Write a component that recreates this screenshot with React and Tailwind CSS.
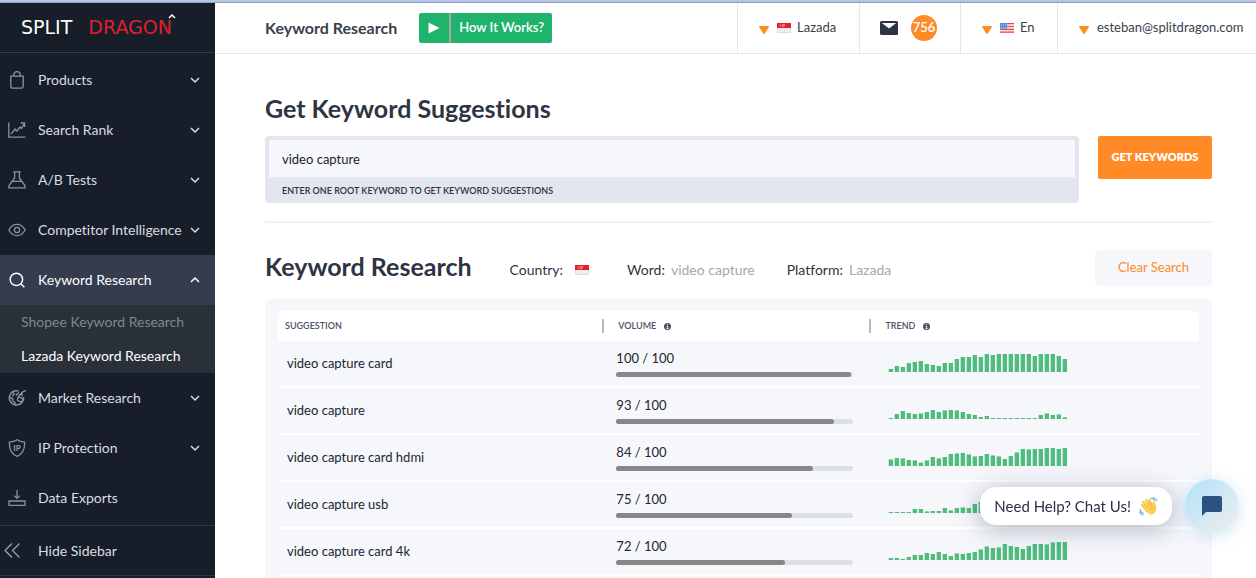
import React, { useState } from 'react';

const NAV_TOP = [
  { label: 'Products',                icon: 'bag',   menu: true },
  { label: 'Search Rank',             icon: 'chart', menu: true },
  { label: 'A/B Tests',               icon: 'flask', menu: true },
  { label: 'Competitor Intelligence', icon: 'eye',   menu: true },
];

const NAV_BOTTOM = [
  { label: 'Market Research', icon: 'market', menu: true },
  { label: 'IP Protection',   icon: 'shield', menu: true },
  { label: 'Data Exports',    icon: 'export', menu: false },
];

const ROWS = [
  { word: 'video capture card',      volume: 100, fill: 99, trend: [3, 6, 5, 9, 10, 11, 8, 7, 6, 9, 9, 13, 15, 15, 17, 15, 18, 17, 18, 18, 18, 18, 18, 18, 16, 18, 18, 18, 16, 13] },
  { word: 'video capture',           volume: 93,  fill: 92, trend: [1, 5, 8, 6, 5, 5.5, 7, 9, 7, 8.5, 9, 8.5, 7, 5, 4, 2, 3, 1, 1, 1, 1, 1, 1, 1, 1, 4, 5.5, 4, 4.5, 1.5] },
  { word: 'video capture card hdmi', volume: 84,  fill: 83, trend: [6.5, 8, 7.5, 6, 5.5, 3.3, 5.5, 9, 7.5, 9, 12, 12.5, 13, 11.5, 9.5, 10, 12, 10.5, 9.5, 7, 10, 13.5, 17, 16.5, 17, 17, 18, 18, 17, 18] },
  { word: 'video capture usb',       volume: 75,  fill: 74, trend: [1, 1, 1, 1, 4, 4, 1.5, 2, 2, 5, 2.5, 5, 5.5, 5, 9, 11, 12, 10, 13, 12, 14, 13, 12, 14, 15, 16, 17, 16, 18, 18] },
  { word: 'video capture card 4k',   volume: 72,  fill: 71, trend: [2, 2, 1, 3, 5, 5, 7, 6, 8, 6, 4, 6.5, 6, 7, 8, 10.5, 13.5, 12, 12.5, 16, 14, 13, 11, 14, 16, 16, 15.5, 17.5, 18, 18] },
];

function NavIcon({ name }) {
  return (
    <svg width="18" height="18" viewBox="0 0 18 18" fill="none" stroke="currentColor" strokeWidth="1.3" aria-hidden="true">
      {name === 'bag' && (
        <>
          <path d="M2.8 5.2h12.4v10a2 2 0 0 1-2 2H4.8a2 2 0 0 1-2-2z" />
          <path d="M5.8 5V3.8a3.2 3.2 0 0 1 6.4 0V5" />
        </>
      )}
      {name === 'chart' && (
        <>
          <path d="M.8 1.5v14.7h16.6" />
          <path d="M3 13.2l4-5.2 2 2 3-4 1.4 1.4 3-4.8M12.8 2h3.8v4" />
        </>
      )}
      {name === 'flask' && (
        <path d="M5.2.9h7.6M6.6 1v6L.9 14.8v2h16.2v-2L11.4 7V1M4.6 10.3h8.8" />
      )}
      {name === 'eye' && (
        <>
          <path d="M.8 9C3 5.2 5.6 3.4 9 3.4S15 5.2 17.2 9C15 12.8 12.4 14.6 9 14.6S3 12.8.8 9z" />
          <circle cx="9" cy="9" r="2.6" />
        </>
      )}
      {name === 'search' && (
        <>
          <circle cx="8.4" cy="8.4" r="6.2" strokeWidth="1.5" />
          <path d="M13 13l3.4 3.2" strokeWidth="1.5" />
        </>
      )}
      {name === 'market' && (
        <>
          <path d="M10.6 2A7.2 7.2 0 1 0 15.6 8" strokeWidth="1.5" />
          <path d="M1.4 8.2l3.4 1.6.2 2.6 2 1 .4 3.2M5 2.8l1.2 2.4-2 2.2M9.8 8.8l2.8-.4 2.6 1.6-1.6 2.8-2.4-.4-1.8-1.4z" />
          <path d="M7.8 6.6l3-3M10 8.2l4-5 4-1.8M14 3.4v3.8" strokeWidth="1.4" />
        </>
      )}
      {name === 'shield' && (
        <>
          <path d="M9 .8c2 1.6 4.6 2.3 7.6 2.3.4 7-1.6 11.8-7.6 14.2C3 14.9 1 10.1 1.4 3.1 4.4 3.1 7 2.4 9 .8z" />
          <text x="9" y="11.5" textAnchor="middle" fontFamily="Lato, sans-serif" fontSize="8" fontWeight="900" fill="currentColor" stroke="none">IP</text>
        </>
      )}
      {name === 'export' && (
        <path d="M1 12h16v4.4H1zM9 1v8.2M6.2 6.6L9 9.4l2.8-2.8" />
      )}
    </svg>
  );
}

function Chevron({ up }) {
  return (
    <svg width="10" height="8" viewBox="0 0 10 8" className="shrink-0" fill="none" stroke="currentColor" strokeWidth="1.5" aria-hidden="true">
      <path d={up ? 'M1 6l4-4 4 4' : 'M1 2l4 4 4-4'} />
    </svg>
  );
}

function NavItem({ item, active }) {
  return (
    <button
      type="button"
      aria-expanded={item.menu ? !!active : undefined}
      className={`flex h-[50px] w-full items-center gap-3 pr-[15px] pl-2 text-left text-sm ${active ? 'bg-[#353c50] text-white' : 'text-[#d9dce2]'}`}
    >
      <span className={active ? 'text-white' : 'text-[#8c929d]'}><NavIcon name={item.icon} /></span>
      <span className="min-w-0 flex-1 whitespace-nowrap">{item.label}</span>
      {item.menu && <Chevron up={active} />}
    </button>
  );
}

function Sidebar() {
  return (
    <aside className="w-[215px] shrink-0 bg-[#171e29]">
      <a href="#" aria-label="Split Dragon" className="flex h-[50px] items-center gap-4 border-b border-[#323c4c] pl-[21px] font-['DejaVu_Sans'] text-[19px]">
        <span className="text-white">SPLIT</span>
        <span className="relative text-[#e01f2d]">
          DRAGON
          <svg className="absolute top-0 -right-1 text-white" width="8" height="6" viewBox="0 0 8 6" fill="none" stroke="currentColor" strokeWidth="1.5">
            <path d="M1 5l3-3 3 3" />
          </svg>
        </span>
      </a>
      <nav>
        <div className="pt-0.5">
          {NAV_TOP.map((item) => <NavItem key={item.label} item={item} />)}
          <NavItem item={{ label: 'Keyword Research', icon: 'search', menu: true }} active />
        </div>
        <ul className="bg-[#293038] text-sm">
          <li><a href="#" className="flex h-[34px] items-center pl-[21px] text-[#7f8694]">Shopee Keyword Research</a></li>
          <li><a href="#" aria-current="page" className="flex h-[34px] items-center pl-[21px] text-white">Lazada Keyword Research</a></li>
        </ul>
        {NAV_BOTTOM.map((item) => <NavItem key={item.label} item={item} />)}
        <button type="button" className="mt-0.5 flex h-[51px] w-full items-center gap-4 border-y border-[#2c3846] pl-1 text-sm text-[#d9dce2]">
          <svg width="18" height="18" viewBox="0 0 18 18" fill="none" stroke="#9aa0aa" strokeWidth="1.3" aria-hidden="true">
            <path d="M8 1.5L1 8.5l7 7M15.5 1.5l-7 7 7 7" />
          </svg>
          Hide Sidebar
        </button>
      </nav>
    </aside>
  );
}

function Caret() {
  return (
    <svg width="10" height="8" viewBox="0 0 10 8" className="mt-1" fill="#ff8a26" aria-hidden="true">
      <path d="M.8 0h8.4q1 .2.5 1.2L6 7.3Q5 8.4 4 7.3L.3 1.2Q-.2.2.8 0z" />
    </svg>
  );
}

function FlagSG() {
  return (
    <svg width="14" height="10" viewBox="0 0 14 10" role="img" aria-label="Singapore">
      <rect width="14" height="10" fill="#dcdcdc" />
      <rect x="1" y="5" width="12" height="4" fill="#f0f0f0" />
      <rect width="14" height="5" fill="#e3202b" />
      <path d="M3.2 1.6v2M5 1.8h3M4.6 3.2h3" stroke="#f7b3b6" strokeWidth=".9" />
    </svg>
  );
}

function FlagUS() {
  return (
    <svg width="14" height="10" viewBox="0 0 14 10" role="img" aria-label="United States">
      <rect width="14" height="10" fill="#f8e3e3" />
      <path d="M0 .7h14M0 3.5h14M0 6.3h14M0 9.2h14" stroke="#e2474d" strokeWidth="1.2" />
      <rect width="7" height="5.6" fill="#4f8fe0" />
      <path d="M1 1.5h5M1 3h5M1 4.5h5" stroke="#a9cbf5" strokeWidth=".6" strokeDasharray="1 1" />
    </svg>
  );
}

function TopBar() {
  return (
    <header className="flex h-[51px] items-stretch border-b border-[#e6e7e9] pl-[50px] text-[#3a3f4c]">
      <div className="flex flex-1 items-center gap-[22px]">
        <h1 className="font-bold whitespace-nowrap">Keyword Research</h1>
        <button type="button" className="flex h-[30px] items-stretch overflow-hidden rounded-xs bg-[#1fb36c] text-[13px] font-semibold whitespace-nowrap text-white">
          <span className="flex w-8 items-center justify-center border-r-2 border-[#a3aaa7]">
            <svg width="12" height="12" viewBox="0 0 12 12" fill="#fff" aria-hidden="true"><path d="M.5.5l11 5.5-11 5.5z" /></svg>
          </span>
          <span className="flex items-center px-2">How It Works?</span>
        </button>
      </div>
      <label className="flex w-[122px] items-center border-l border-[#e6e7e9] pl-[21px]">
        <Caret />
        <span className="mr-1.5 ml-2"><FlagSG /></span>
        <select aria-label="Platform" className="w-11 appearance-none text-[13px] outline-none">
          <option>Lazada</option>
          <option>Shopee</option>
        </select>
      </label>
      <div className="flex w-[101px] items-center gap-[13px] border-l border-[#e6e7e9] pl-5">
        <svg width="18" height="14" viewBox="0 0 18 14" aria-hidden="true">
          <rect width="18" height="14" rx="1.5" fill="#2e3342" />
          <path d="M1.8 2h14.4L9 7.4z" fill="#fff" />
        </svg>
        <span className="flex size-[26px] items-center justify-center rounded-full bg-[#ff8a26] text-[13px] font-semibold text-white">756</span>
      </div>
      <label className="flex w-[97px] items-center border-l border-[#e6e7e9] pl-[21px]">
        <Caret />
        <span className="mr-1.5 ml-2"><FlagUS /></span>
        <select aria-label="Language" className="w-8 appearance-none text-[13px] outline-none">
          <option>En</option>
        </select>
      </label>
      <button type="button" className="flex w-[199px] items-center gap-2 border-l border-[#e6e7e9] pl-[21px] text-[13px]">
        <Caret />
        esteban@splitdragon.com
      </button>
    </header>
  );
}

function InfoDot() {
  return (
    <svg width="7" height="7" viewBox="0 0 7 7" aria-hidden="true">
      <circle cx="3.5" cy="3.5" r="3.5" fill="#4a5060" />
      <path d="M3.5 1.2v1M2.7 3.2h1v2.2M2.6 5.5h2" stroke="#fff" strokeWidth=".9" fill="none" />
    </svg>
  );
}

function Trend({ values }) {
  return (
    <svg width="180" height="18" viewBox="0 0 180 18" role="img" aria-label="Trend" className="block">
      {values.map((v, i) => (
        <g key={i} fill="#50bd7f">
          <rect x={i * 6} y={18 - v} width="5" height={v} opacity=".35" />
          <rect x={i * 6 + 1} y={18 - v} width="4" height={v} />
        </g>
      ))}
    </svg>
  );
}

function ResultsTable() {
  return (
    <div className="flex-1 rounded-t-md bg-[#f5f7fb] px-[13px] pt-3">
      <table className="w-full table-fixed border-separate border-spacing-0 text-left text-[13px] text-[#22262f]">
        <colgroup>
          <col className="w-[35%]" />
          <col className="w-[29%]" />
          <col />
        </colgroup>
        <thead className="text-[9px] text-[#4c5468]">
          <tr className="h-[30px] bg-white">
            <th className="rounded-tl-sm p-0 pl-[7px] font-semibold">SUGGESTION</th>
            <th className="p-0 font-semibold">
              <span className="ml-0.5 flex h-3.5 items-center gap-2 border-l-2 border-[#b0bccb] pl-3.5">VOLUME <InfoDot /></span>
            </th>
            <th className="rounded-tr-sm p-0 font-semibold">
              <span className="ml-0.5 flex h-3.5 items-center gap-2 border-l-2 border-[#b0bccb] pl-3.5">TREND <InfoDot /></span>
            </th>
          </tr>
        </thead>
        <tbody>
          {ROWS.map((row) => (
            <tr key={row.word} className="h-[47px]">
              <td className="border-b-2 border-white p-0 pl-[9px]">{row.word}</td>
              <td className="border-b-2 border-white p-0 pr-3.5 pb-0.5 pl-4">
                <span className="block leading-5">{row.volume} / 100</span>
                <div className="mt-1 h-[5px] rounded-full bg-[#dcdfe5]">
                  <div className="h-full rounded-full bg-[#878787]" style={{ width: `${row.fill}%` }} />
                </div>
              </td>
              <td className="border-b-2 border-white p-0 pb-px pl-[21px]"><Trend values={row.trend} /></td>
            </tr>
          ))}
        </tbody>
      </table>
    </div>
  );
}

function WavingHand() {
  return (
    <svg width="19" height="19" viewBox="0 0 19 19" aria-hidden="true">
      <g stroke="#fcd04f" strokeWidth="2.6" strokeLinecap="round" fill="none">
        <path d="M3 8l5 6M4.2 5l6 7M7 3.2l5.5 7M10.2 3.2l4 6" />
      </g>
      <path d="M7 13.5L14 7.5q-.8-3.2 1-3.5 1 .3 1.4 3.5c1.8 4.5.6 8.5-3 9.8-2.6.6-4.4-.8-6.4-3.8z" fill="#fcd04f" />
      <path d="M4.8 7l3.6 4.2M7.2 5.6l3.4 4.2M10.4 5l2.6 3.6M11 12.8q.8-2.4 3.2-2.8" stroke="#e0a02f" strokeWidth=".7" fill="none" />
      <path d="M12 1.4q3-.2 4 2.4M14.2.5q3 .5 3.8 3.4M1 12.5q.2 3.2 3.4 4M.5 15q.8 2.6 3.3 3.2" stroke="#4a9be0" strokeWidth="1" fill="none" strokeLinecap="round" />
    </svg>
  );
}

function ChatWidget() {
  return (
    <div className="fixed right-[17px] bottom-[45px] flex items-center gap-[13px]">
      <button type="button" className="flex h-[38px] items-center gap-2 rounded-2xl bg-white px-3.5 text-[15px] whitespace-nowrap text-[#2a3147] shadow-[0_4px_24px_rgba(40,50,80,0.35)]">
        Need Help? Chat Us! <WavingHand />
      </button>
      <button type="button" aria-label="Open chat" className="flex size-[54px] items-center justify-center rounded-full bg-linear-to-br from-[#b0e2fa] to-[#f0eeee] shadow-[0_3px_16px_rgba(110,180,220,0.35)]">
        <svg width="20" height="20" viewBox="0 0 20 20" fill="#2c5282" aria-hidden="true">
          <path d="M2 0h16q2 0 2 2v12q0 2-2 2H4l-4 4V2q0-2 2-2z" />
        </svg>
      </button>
    </div>
  );
}

export default function App() {
  const [keyword, setKeyword] = useState('video capture');

  return (
    <div className="flex min-h-screen flex-col bg-white font-['Lato',sans-serif] [font-variant-ligatures:none]">
      <div className="h-[3px] border-b border-[#8f9db9] bg-[#b5c5e8]" />
      <div className="flex flex-1">
        <Sidebar />
        <div className="flex min-w-0 flex-1 flex-col">
          <TopBar />
          <main className="flex flex-1 flex-col pt-9 pr-11 pl-[50px] text-[#2f3442]">
            <h2 className="text-[25px] leading-9 font-bold">Get Keyword Suggestions</h2>
            <form className="mt-2.5 flex items-start gap-[19px] border-b-2 border-[#f1f2f5] pb-[18px]" onSubmit={(e) => e.preventDefault()}>
              <div className="flex-1 rounded-sm bg-[#e3e6ee] px-1 pt-1">
                <input
                  id="root-keyword"
                  type="text"
                  value={keyword}
                  onChange={(e) => setKeyword(e.target.value)}
                  className="block h-[37px] w-full bg-[#f5f7fb] px-[13px] text-[13px] text-[#1b1f27] outline-none"
                />
                <label htmlFor="root-keyword" className="flex h-[26px] items-center px-[13px] pt-0.5 text-[9px] font-semibold">
                  ENTER ONE ROOT KEYWORD TO GET KEYWORD SUGGESTIONS
                </label>
              </div>
              <button type="submit" className="h-[43px] w-[114px] rounded-xs bg-[#ff8a26] text-[11px] font-extrabold text-white">
                GET KEYWORDS
              </button>
            </form>

            <section className="mt-[27px] flex flex-1 flex-col">
              <div className="mb-[13px] flex h-9 items-center">
                <h2 className="pb-1 text-[25px] leading-8 font-bold whitespace-nowrap">Keyword Research</h2>
                <dl className="flex flex-1 items-center gap-8 pt-1 pl-[38px] text-sm">
                  <div className="flex items-center gap-3 pr-1.5"><dt>Country:</dt><dd><FlagSG /></dd></div>
                  <div className="flex gap-1.5"><dt>Word:</dt><dd className="text-[#a3a7b1]">video capture</dd></div>
                  <div className="flex gap-1.5"><dt>Platform:</dt><dd className="text-[#a3a7b1]">Lazada</dd></div>
                </dl>
                <button type="button" className="h-9 w-[117px] rounded-sm bg-[#f5f7fb] text-[13px] text-[#ff8a26]">Clear Search</button>
              </div>
              <ResultsTable />
            </section>
          </main>
        </div>
      </div>
      <ChatWidget />
    </div>
  );
}
